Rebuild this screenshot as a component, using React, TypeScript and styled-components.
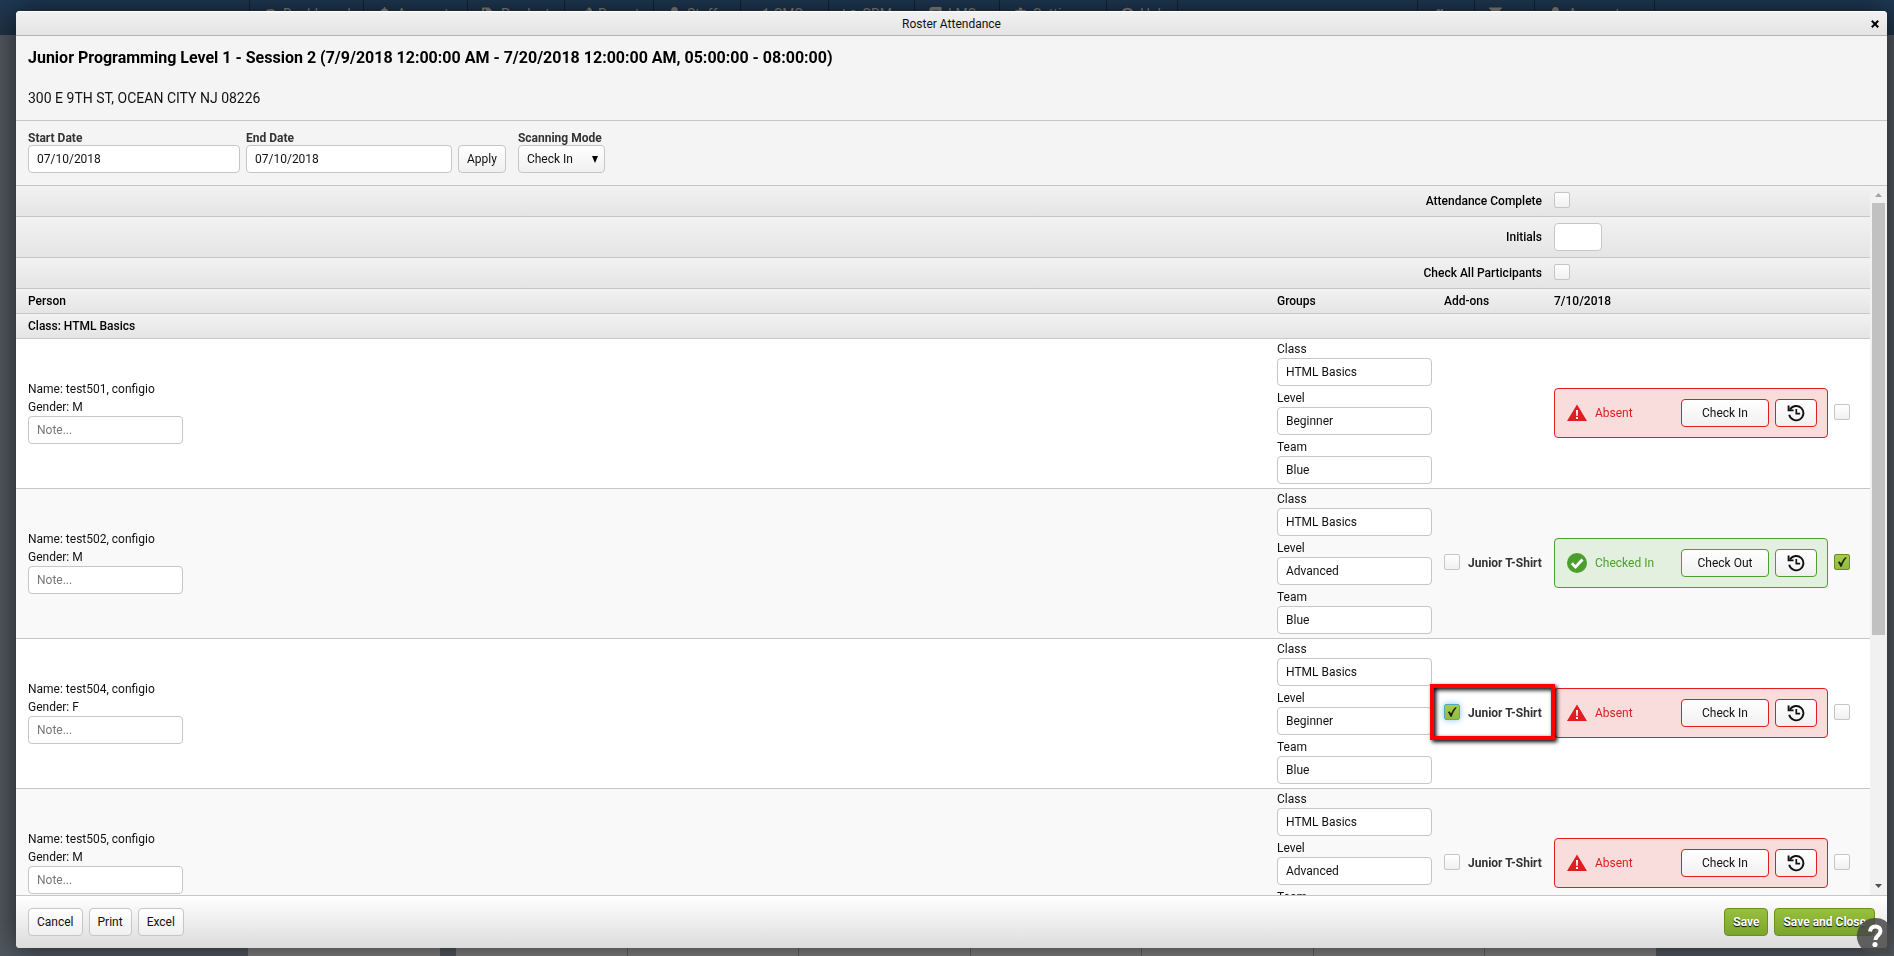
import React, { useId } from "react";
import styled, { createGlobalStyle, css } from "styled-components";
import type { IconType } from "react-icons";
import {
  FaBell,
  FaBook,
  FaBullhorn,
  FaChartLine,
  FaCog,
  FaFilter,
  FaHome,
  FaPen,
  FaQuestionCircle,
  FaTachometerAlt,
  FaTag,
  FaUser,
} from "react-icons/fa";

const line = "#c6c6c6";
const red = "#dd1f1f";
const green = "#4c9f2f";

const GlobalStyle = createGlobalStyle`
  *, *::before, *::after { box-sizing: border-box; }
  body {
    margin: 0;
    font: 12px/18px Roboto, "Liberation Sans", sans-serif;
    color: #111;
  }
  input, button, select { font: inherit; color: inherit; margin: 0; }
`;

/* ---------- page behind the dialog ---------- */

const Page = styled.div`
  height: 100vh;
  overflow: hidden;
  display: flex;
  flex-direction: column;
  background: #50575f;
`;

const NavBar = styled.nav`
  height: 35px;
  flex: none;
  display: flex;
  justify-content: space-between;
  padding: 0 239px 0 249px;
  background: linear-gradient(#1f3955, #1f3243);
  overflow: hidden;
`;

const NavGroup = styled.div`
  display: flex;
  border-right: 1px solid #16222f;
`;

const NavItem = styled.a<{ $width: number }>`
  width: ${(p) => p.$width}px;
  display: flex;
  gap: 6px;
  padding: 5px 0 0 14px;
  border-left: 1px solid #16222f;
  color: #8a8580;
  font-size: 14px;
  line-height: 18px;
  text-decoration: none;
  svg { width: 13px; height: 14px; margin-top: 2px; flex: none; }
`;

const Backdrop = styled.main`
  flex: 1;
  display: flex;
  align-items: flex-end;
  gap: 16px;
  padding: 0 238px 0 248px;
`;

const SidePanel = styled.div`
  width: 192px;
  height: 40px;
  background: #808080;
`;

const BackGrid = styled.div`
  flex: 1;
  height: 40px;
  display: flex;
  background: #808080;
`;

const BackCell = styled.div`
  flex: 1;
  & + & { border-left: 1px solid #606060; }
`;

/* ---------- dialog ---------- */

const Dialog = styled.section`
  position: fixed;
  inset: 11px 7px 8px 16px;
  display: flex;
  flex-direction: column;
  border-radius: 4px;
  overflow: hidden;
  background: #f4f4f4;
`;

const DialogShadow = styled.div`
  position: fixed;
  inset: 11px 7px 8px 16px;
  border-radius: 4px;
  box-shadow: 0 0 28px rgba(0, 0, 0, 0.6);
`;

const TitleBar = styled.header`
  display: grid;
  grid-template-columns: 1fr auto 1fr;
  align-items: center;
  height: 25px;
  flex: none;
  border-top: 1px solid #fff;
  border-bottom: 1px solid #b5b5b5;
  background: linear-gradient(#f1f1f1, #e4e4e4);
`;

const DialogTitle = styled.h1`
  grid-column: 2;
  margin: 0;
  font-size: 12px;
  font-weight: 400;
`;

const CloseButton = styled.button`
  justify-self: end;
  display: grid;
  place-items: center;
  width: 24px;
  height: 22px;
  padding: 0;
  border: 0;
  background: none;
`;

const Intro = styled.div`
  padding: 12px;
  border-bottom: 1px solid ${line};
  line-height: 20px;
`;

const SessionName = styled.h2`
  margin: 0 0 20px;
  font-size: 16px;
  font-weight: 700;
  color: #000;
`;

const Address = styled.p`
  margin: 0;
  font-size: 14px;
`;

const Filters = styled.form`
  display: flex;
  align-items: flex-end;
  gap: 6px;
  padding: 10px 12px 12px;
  border-bottom: 1px solid ${line};
`;

const FilterField = styled.div<{ $width: number; $gap?: boolean }>`
  width: ${(p) => p.$width}px;
  margin-left: ${(p) => (p.$gap ? 6 : 0)}px;
  display: flex;
  flex-direction: column;
`;

const FilterLabel = styled.label`
  line-height: 14px;
  font-weight: 700;
  color: #333;
  white-space: nowrap;
`;

const TextBox = styled.input<{ $width?: number }>`
  display: block;
  width: ${(p) => (p.$width ? `${p.$width}px` : "100%")};
  height: 28px;
  padding: 0 8px;
  border: 1px solid ${line};
  border-radius: 4px;
  background: #fff;
  &::placeholder { color: #777; opacity: 1; }
`;

const SelectWrap = styled.div`
  display: grid;
  align-items: center;
  > * { grid-area: 1 / 1; }
  svg { justify-self: end; margin-right: 7px; pointer-events: none; }
`;

const Select = styled.select`
  appearance: none;
  width: 100%;
  height: 28px;
  padding: 0 8px;
  border: 1px solid ${line};
  border-radius: 4px;
  background: linear-gradient(#fff, #f0f0f0);
`;

const Button = styled.button<{ $primary?: boolean }>`
  height: 28px;
  padding: 0 8px;
  border: 1px solid ${line};
  border-radius: 4px;
  background: linear-gradient(#fff, #f0f0f0);
  white-space: nowrap;
  ${(p) =>
    p.$primary &&
    css`
      border-color: #68901c;
      background: linear-gradient(#97c03d, #7da52d);
      color: #fff;
      font-weight: 700;
      text-shadow: 0 1px 1px #000;
    `}
`;

const Footer = styled.footer`
  display: flex;
  gap: 6px;
  padding: 12px;
  border-top: 1px solid ${line};
  background: linear-gradient(#fff, #dcdcdc);
`;

const Spacer = styled.div`
  flex: 1;
`;

/* ---------- roster ---------- */

const RosterArea = styled.div`
  flex: 1;
  min-height: 0;
  display: flex;
  background: #fff;
`;

const RosterView = styled.div`
  flex: 1;
  min-width: 0;
  overflow: hidden;
`;

const ScrollBar = styled.div`
  width: 17px;
  display: flex;
  flex-direction: column;
  background: #f1f1f1;
`;

const ScrollArrow = styled.svg`
  width: 17px;
  height: 17px;
  flex: none;
`;

const ScrollTrack = styled.div`
  flex: 1;
  padding: 0 2px;
`;

const ScrollThumb = styled.div`
  height: 64%;
  background: #c1c1c1;
`;

const Table = styled.table`
  width: 100%;
  table-layout: fixed;
  border-collapse: separate;
  border-spacing: 0;
`;

const Col = styled.col<{ $width: number }>`
  width: ${(p) => p.$width}px;
`;

const BarRow = styled.tr<{ $height: number }>`
  height: ${(p) => p.$height}px;
  background: linear-gradient(#f2f2f2, #e4e4e4);
`;

const PersonRow = styled.tr`
  height: 150px;
  background: #fff;
  &:nth-child(even) { background: #f9f9f9; }
`;

const cell = css`
  position: relative;
  padding: 0 6px;
  border-bottom: 1px solid ${line};
  text-align: left;
  vertical-align: middle;
  &:first-child { padding-left: 12px; }
`;

const HeadCell = styled.th<{ $right?: boolean }>`
  ${cell}
  font-weight: 500;
  color: #000;
  ${(p) => p.$right && "text-align: right;"}
`;

const Cell = styled.td`
  ${cell}
`;

const PersonInfo = styled.div`
  padding-bottom: 3px;
`;

const GroupList = styled.div`
  display: grid;
  gap: 3px;
  padding: 1px 0 4px;
`;

const GroupLabel = styled.label`
  display: block;
`;

const CheckWrap = styled.span`
  display: inline-grid;
  place-items: center;
  vertical-align: middle;
  margin-bottom: 2px;
  flex: none;
  > * { grid-area: 1 / 1; }
  svg { pointer-events: none; }
`;

const CheckInput = styled.input<{ $focused?: boolean }>`
  appearance: none;
  width: 16px;
  height: 16px;
  border: 1px solid ${line};
  border-radius: 2px;
  background: linear-gradient(#fff, #f0f0f0);
  &:checked {
    border-color: #6b8f1f;
    background: linear-gradient(#a6cb50, #93bb3e);
  }
  & + svg { visibility: hidden; }
  &:checked + svg { visibility: visible; }
  ${(p) =>
    p.$focused &&
    css`
      &:checked { border-color: #52a8b8; }
      box-shadow: 0 0 6px rgba(82, 168, 236, 0.7);
    `}
`;

const AddOn = styled.label`
  display: flex;
  align-items: center;
  gap: 8px;
  padding-bottom: 2px;
  font-weight: 700;
  color: #333;
  white-space: nowrap;
`;

const Highlight = styled.div`
  position: absolute;
  inset: 45px -7px 48px -8px;
  z-index: 1;
  border: 4px solid #f00;
  box-shadow: 2px 2px 4px #000, inset 2px 2px 4px #000;
  pointer-events: none;
`;

const Attendance = styled.div`
  display: flex;
  align-items: center;
  gap: 6px;
  padding-bottom: 2px;
`;

const StatusBox = styled.div<{ $in: boolean }>`
  width: 274px;
  height: 50px;
  display: flex;
  align-items: center;
  gap: 6px;
  padding: 0 10px 0 12px;
  border: 1px solid ${(p) => (p.$in ? green : red)};
  border-radius: 4px;
  background: ${(p) => (p.$in ? "#e3efdf" : "#f9dcdc")};
`;

const StatusText = styled.span<{ $in: boolean }>`
  flex: 1;
  padding-left: 2px;
  color: ${(p) => (p.$in ? green : red)};
`;

const StatusButton = styled(Button)<{ $in: boolean; $width: number }>`
  width: ${(p) => p.$width}px;
  padding: 0;
  display: grid;
  place-items: center;
  border-color: ${(p) => (p.$in ? green : red)};
`;

const HelpButton = styled.button`
  position: fixed;
  right: 0;
  bottom: 0;
  z-index: 2;
  width: 38px;
  height: 39px;
  padding: 0;
  border: 0;
  background: none;
  svg { display: block; }
`;

/* ---------- drawings ---------- */

const CheckMark = () => (
  <svg width="12" height="12" viewBox="0 0 12 12" aria-hidden="true">
    <path d="M1.800 6.200 3.600 5.200 5 7.600C6.200 5 7.600 2.800 9.400 1.200L10.800 1.600C8.600 4 7 7 5.700 10.800H4.300C3.800 9 3 7.600 1.800 6.200Z" fill="#1b2408" />
  </svg>
);

const WarningIcon = () => (
  <svg width="20" height="20" viewBox="0 0 20 20" aria-hidden="true">
    <path d="M10 1.500 20 18H0Z" fill={red} />
    <path d="M9 7h2l-.3 6H9.300z" fill="#fff" />
    <rect x="9" y="14" width="2" height="2" fill="#fff" />
  </svg>
);

const OkIcon = () => (
  <svg width="20" height="20" viewBox="0 0 20 20" aria-hidden="true">
    <circle cx="10" cy="10" r="10" fill={green} />
    <path d="m4.800 10.200 3.700 3.700 7-7.400" fill="none" stroke="#fff" strokeWidth="2.800" />
  </svg>
);

const HistoryIcon = () => (
  <svg width="18" height="18" viewBox="0 0 18 18" fill="none" stroke="#111" strokeWidth="1.900" aria-hidden="true">
    <path d="M3 5.500A7.200 7.200 0 1 1 2.200 10.800" />
    <path d="M1.600 1.600v4.800h5" />
    <path d="M9.300 5v4.700h3.800" strokeWidth="1.700" />
  </svg>
);

const ArrowDown = () => (
  <svg width="6" height="7" viewBox="0 0 6 7" aria-hidden="true">
    <path d="M0 0h6L3 7z" fill="#000" />
  </svg>
);

/* ---------- parts ---------- */

const Check = ({ id, label, checked, focused }: { id?: string; label?: string; checked?: boolean; focused?: boolean }) => (
  <CheckWrap>
    <CheckInput id={id} type="checkbox" aria-label={label} defaultChecked={checked} $focused={focused} />
    <CheckMark />
  </CheckWrap>
);

const Group = ({ name, value }: { name: string; value: string }) => {
  const id = useId();
  return (
    <div>
      <GroupLabel htmlFor={id}>{name}</GroupLabel>
      <TextBox id={id} $width={155} defaultValue={value} />
    </div>
  );
};

type Person = {
  name: string;
  gender: string;
  level: string;
  addOn?: "off" | "on";
  present?: boolean;
};

const people: Person[] = [
  { name: "test501, configio", gender: "M", level: "Beginner" },
  { name: "test502, configio", gender: "M", level: "Advanced", addOn: "off", present: true },
  { name: "test504, configio", gender: "F", level: "Beginner", addOn: "on" },
  { name: "test505, configio", gender: "M", level: "Advanced", addOn: "off" },
];

const RosterRow = ({ person }: { person: Person }) => {
  const present = !!person.present;
  return (
    <PersonRow>
      <Cell>
        <PersonInfo>
          <div>Name: {person.name}</div>
          <div>Gender: {person.gender}</div>
          <TextBox $width={155} placeholder="Note..." aria-label="Note" />
        </PersonInfo>
      </Cell>
      <Cell>
        <GroupList>
          <Group name="Class" value="HTML Basics" />
          <Group name="Level" value={person.level} />
          <Group name="Team" value="Blue" />
        </GroupList>
      </Cell>
      <Cell>
        {person.addOn && (
          <AddOn>
            <Check checked={person.addOn === "on"} focused={person.addOn === "on"} />
            Junior T-Shirt
          </AddOn>
        )}
        {person.addOn === "on" && <Highlight />}
      </Cell>
      <Cell>
        <Attendance>
          <StatusBox $in={present}>
            {present ? <OkIcon /> : <WarningIcon />}
            <StatusText $in={present}>{present ? "Checked In" : "Absent"}</StatusText>
            <StatusButton type="button" $in={present} $width={88}>
              {present ? "Check Out" : "Check In"}
            </StatusButton>
            <StatusButton type="button" $in={present} $width={42} aria-label="History">
              <HistoryIcon />
            </StatusButton>
          </StatusBox>
          <Check label={`Select ${person.name}`} checked={present} />
        </Attendance>
      </Cell>
    </PersonRow>
  );
};

type NavEntry = { text: string; width: number; icon: IconType };

const mainNav: NavEntry[] = [
  { text: "Dashboard", width: 114, icon: FaTachometerAlt },
  { text: "Accounts", width: 104, icon: FaBell },
  { text: "Products", width: 97, icon: FaTag },
  { text: "Reports", width: 89, icon: FaPen },
  { text: "Staff", width: 87, icon: FaUser },
  { text: "SMS", width: 88, icon: FaBullhorn },
  { text: "CRM", width: 86, icon: FaChartLine },
  { text: "LMS", width: 85, icon: FaBook },
  { text: "Settings", width: 107, icon: FaCog },
  { text: "Help", width: 71, icon: FaQuestionCircle },
];

const userNav: NavEntry[] = [
  { text: "", width: 57, icon: FaHome },
  { text: "", width: 60, icon: FaFilter },
  { text: "Account", width: 120, icon: FaUser },
];

const NavLinks = ({ items }: { items: NavEntry[] }) => (
  <NavGroup>
    {items.map(({ text, width, icon: Icon }, i) => (
      <NavItem key={i} href="#" $width={width}>
        <Icon aria-hidden="true" />
        {text}
      </NavItem>
    ))}
  </NavGroup>
);

export default function App() {
  return (
    <Page>
      <GlobalStyle />
      <NavBar>
        <NavLinks items={mainNav} />
        <NavLinks items={userNav} />
      </NavBar>
      <Backdrop>
        <SidePanel />
        <BackGrid>
          {Array.from({ length: 7 }, (_, i) => (
            <BackCell key={i} />
          ))}
        </BackGrid>
      </Backdrop>

      <DialogShadow />
      <Dialog role="dialog" aria-labelledby="dialog-title">
        <TitleBar>
          <DialogTitle id="dialog-title">Roster Attendance</DialogTitle>
          <CloseButton type="button" aria-label="Close">
            <svg width="8" height="8" viewBox="0 0 8 8" aria-hidden="true">
              <path d="m.8.8 6.400 6.400m0-6.400L.8 7.200" stroke="#000" strokeWidth="2" />
            </svg>
          </CloseButton>
        </TitleBar>

        <Intro>
          <SessionName>
            Junior Programming Level 1 - Session 2 (7/9/2018 12:00:00 AM - 7/20/2018 12:00:00 AM, 05:00:00 - 08:00:00)
          </SessionName>
          <Address>300 E 9TH ST, OCEAN CITY NJ 08226</Address>
        </Intro>

        <Filters>
          <FilterField $width={212}>
            <FilterLabel htmlFor="start">Start Date</FilterLabel>
            <TextBox id="start" defaultValue="07/10/2018" />
          </FilterField>
          <FilterField $width={206}>
            <FilterLabel htmlFor="end">End Date</FilterLabel>
            <TextBox id="end" defaultValue="07/10/2018" />
          </FilterField>
          <Button type="button">Apply</Button>
          <FilterField $width={87} $gap>
            <FilterLabel htmlFor="mode">Scanning Mode</FilterLabel>
            <SelectWrap>
              <Select id="mode" defaultValue="in">
                <option value="in">Check In</option>
                <option value="out">Check Out</option>
              </Select>
              <ArrowDown />
            </SelectWrap>
          </FilterField>
        </Filters>

        <RosterArea>
          <RosterView>
            <Table>
              <colgroup>
                <col />
                <Col $width={167} />
                <Col $width={110} />
                <Col $width={322} />
              </colgroup>
              <thead>
                <BarRow $height={31}>
                  <HeadCell colSpan={3} $right>
                    <label htmlFor="complete">Attendance Complete</label>
                  </HeadCell>
                  <Cell>
                    <Check id="complete" />
                  </Cell>
                </BarRow>
                <BarRow $height={41}>
                  <HeadCell colSpan={3} $right>
                    <label htmlFor="initials">Initials</label>
                  </HeadCell>
                  <Cell>
                    <TextBox id="initials" $width={48} />
                  </Cell>
                </BarRow>
                <BarRow $height={31}>
                  <HeadCell colSpan={3} $right>
                    <label htmlFor="all">Check All Participants</label>
                  </HeadCell>
                  <Cell>
                    <Check id="all" />
                  </Cell>
                </BarRow>
                <BarRow $height={25}>
                  <HeadCell>Person</HeadCell>
                  <HeadCell>Groups</HeadCell>
                  <HeadCell>Add-ons</HeadCell>
                  <HeadCell>7/10/2018</HeadCell>
                </BarRow>
                <BarRow $height={25}>
                  <HeadCell colSpan={4}>Class: HTML Basics</HeadCell>
                </BarRow>
              </thead>
              <tbody>
                {people.map((p) => (
                  <RosterRow key={p.name} person={p} />
                ))}
              </tbody>
            </Table>
          </RosterView>
          <ScrollBar aria-hidden="true">
            <ScrollArrow viewBox="0 0 17 17">
              <path d="M5 11h7L8.500 7z" fill="#a3a3a3" />
            </ScrollArrow>
            <ScrollTrack>
              <ScrollThumb />
            </ScrollTrack>
            <ScrollArrow viewBox="0 0 17 17">
              <path d="M5 6h7l-3.500 4z" fill="#505050" />
            </ScrollArrow>
          </ScrollBar>
        </RosterArea>

        <Footer>
          <Button type="button">Cancel</Button>
          <Button type="button">Print</Button>
          <Button type="button">Excel</Button>
          <Spacer />
          <Button type="button" $primary>Save</Button>
          <Button type="button" $primary>Save and Close</Button>
        </Footer>
      </Dialog>

      <HelpButton type="button" aria-label="Help">
        <svg width="38" height="39" viewBox="0 0 38 39" aria-hidden="true">
          <path d="M19 1a18 18 0 0 1 14.500 29C33 33 34 35 37 36.500 32 38 28 37 26 35.500A18 18 0 1 1 19 1Z" fill="#484848" fillOpacity=".85" />
          <path d="M14 14.500C14.500 11 17 9.500 19.500 9.500c3 0 5 1.800 5 4.500 0 4.500-5 4.500-5 9" fill="none" stroke="#fff" strokeWidth="4" />
          <circle cx="19" cy="27.500" r="2.600" fill="#fff" />
        </svg>
      </HelpButton>
    </Page>
  );
}
